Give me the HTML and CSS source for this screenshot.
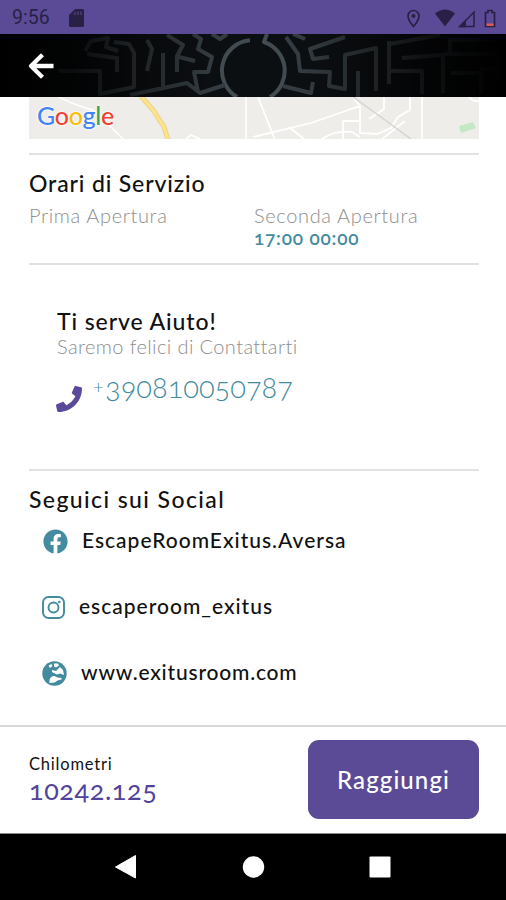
FILE: index.html
```
<!DOCTYPE html>
<html lang="it">
<head>
    <meta charset="UTF-8">
    <meta name="viewport" content="width=device-width, initial-scale=1.0">
    <title>Exitus Room</title>
    <link rel="stylesheet" href="styles.css">
</head>
<body>
    <div class="status-bar">
        <span class="clock">9:56</span>
        <svg class="sd-icon" width="16" height="18" viewBox="0 0 16 18"><path d="M6 0h7.500Q15 0 15 1.500v15Q15 18 13.500 18h-12Q0 18 0 16.500V6z" fill="#292046"/><path d="M6 3v3M9 2.500V6M12 2.500V6" stroke="#5b4b97" stroke-width="1"/></svg>
        <svg class="status-icons" width="92" height="22" viewBox="0 0 92 22" fill="none" stroke="#292046" stroke-width="1.700">
            <path d="M7.500 17.500C4 13.500 2 10.500 2 7a5.500 5.500 0 0 1 11 0c0 3.500-2 6.500-5.500 10.500z"/>
            <circle cx="7.500" cy="7" r="2" fill="#292046" stroke="none"/>
            <path d="M29 4.500q10-8 20 0L39 17.500z" fill="#292046" stroke="none"/>
            <path d="M54 17.500 68 3v14.500z" stroke-width="1.500"/>
            <path d="M52 18.300l8-8v8z" fill="#292046" stroke="none"/>
            <path d="M79.500 3.500H82v-2h4v2h2.500v14h-9z"/>
            <path d="M80.500 14.500h7V17h-7z" fill="#dd5b50" stroke="none"/>
        </svg>
    </div>

    <div class="header">
        <svg class="maze" width="506" height="63" viewBox="0 0 506 63">
            <defs>
                <linearGradient id="fade">
                    <stop offset="0" stop-color="#000"/>
                    <stop offset=".16" stop-color="#000" stop-opacity=".75"/>
                    <stop offset=".42" stop-color="#000" stop-opacity="0"/>
                    <stop offset=".6" stop-color="#000" stop-opacity="0"/>
                    <stop offset=".85" stop-color="#000" stop-opacity=".75"/>
                    <stop offset="1" stop-color="#000"/>
                </linearGradient>
            </defs>
            <rect width="506" height="63" fill="#0c0f12"/>
            <g fill="none" stroke="#343c41" stroke-width="4" stroke-linejoin="round">
                <path d="M250 6.300A30.500 30.500 0 0 0 237 63M267 0l-3 8a30.500 30.500 0 0 1 6 55" stroke="#414b50"/>
                <path d="M58 37h42v23l34-7V19l-5-9-15-2M87 20l30 4v14M85 17l6-10 17-3-2 9 12 4M147 37l5-22-5-9M163 54V19M167 1l16 10-6 11v16M179 23l16 4M193 0l8 5-3 10 14 8-4 15h-14l4 20M130 61l57-12 13 10 25-8M212 0l8 5 7-5"/>
                <path d="M286 3l12 17 2 17 30 1-1 14 16 3V21l31-7v43M345 3l-35 12 3 10 16-2M293 0l12 5M358 37v26M283 52l28 7 2-11M389 7v43M390 10l50-9M402 24l41-3v38M391 37h31v23M444 20h53v28M450 20V6h56M451 39h30v21M480 35h26"/>
            </g>
            <rect width="506" height="63" fill="url(#fade)"/>
        </svg>
        <svg class="back" width="28" height="26" viewBox="0 0 28 26" fill="none" stroke="#fff" stroke-width="4.300" stroke-linejoin="round"><path d="M15.500 1.700 4 13l11.500 11.300M4.500 13H26.500"/></svg>
    </div>

    <main class="content">
        <div class="map">
            <svg width="450" height="42" viewBox="0 0 450 42" fill="none">
                <g stroke="#fff">
                    <path d="M28-1q17 9 36 14l19 18 12 12M217-1v43" stroke-width="1.500"/>
                    <path d="M229 0l17 43M224 40l58-14 49-17v27l17 1 14-6 7-11 12-7V0M324 0l7 9M314 24v18M314 24h17M293 42q13-9 30-7l8 5M353 42l23-18M393 0v42M355 0v12l-15 10M157 42l5-4 9 4M440 0q4 5 10 4M260 30l15 12" stroke-width="1.800"/>
                </g>
                <path d="M324 0l28 20 30 22" stroke="#d6d4d0" stroke-width="1.500"/>
                <path d="M112-1l12 14 11 17 4 13" stroke="#e8cf78" stroke-width="5"/>
                <path d="M112-1l12 14 11 17 4 13" stroke="#fbe38d" stroke-width="3.500"/>
                <path d="M430 29l14-4 3 6-15 5z" fill="#c3e8c6"/>
            </svg>
            <div class="google"><span class="blue">G</span><span class="red">o</span><span class="yellow">o</span><span class="blue">g</span><span class="green">l</span><span class="red">e</span></div>
        </div>

        <section class="hours">
            <h2 class="hours-title">Orari di Servizio</h2>
            <div class="hours-grid">
                <div class="label">Prima Apertura</div>
                <div>
                    <div class="label">Seconda Apertura</div>
                    <div class="time">17:00 00:00</div>
                </div>
            </div>
        </section>

        <section class="help">
            <h2 class="help-title">Ti serve Aiuto!</h2>
            <div class="label">Saremo felici di Contattarti</div>
            <div class="phone">
                <svg width="26" height="26" viewBox="0 0 512 512"><path fill="#5b4a9c" d="M493.400 24.600l-104-24c-11.300-2.600-22.900 3.300-27.500 13.900l-48 112c-4.200 9.800-1.400 21.300 6.900 28l60.600 49.600c-36 76.700-98.900 140.500-177.200 177.200l-49.600-60.600c-6.800-8.300-18.200-11.100-28-6.900l-112 48C3.900 366.500-2 378.100.6 389.400l24 104C27.100 504.200 36.700 512 48 512c256.100 0 464-207.500 464-464 0-11.200-7.700-20.900-18.600-23.400z"/></svg>
                <span class="plus">+</span><span>390810050787</span>
            </div>
        </section>

        <section class="social">
            <h2 class="social-title">Seguici sui Social</h2>
            <div class="social-row">
                <svg width="25" height="25" viewBox="0 0 512 512"><path fill="#438b9e" d="M504 256C504 119 393 8 256 8S8 119 8 256c0 123.800 90.700 226.400 209.300 245V327.700h-63V256h63v-54.600c0-62.200 37-96.500 93.700-96.500 27.100 0 55.500 4.800 55.500 4.800v61h-31.300c-30.800 0-40.400 19.100-40.400 38.700V256h68.800l-11 71.700h-57.800V501C413.300 482.400 504 379.800 504 256z"/></svg>
                <span class="facebook">EscapeRoomExitus.Aversa</span>
            </div>
            <div class="social-row instagram">
                <svg width="25" height="25" viewBox="0 0 25 25" fill="none" stroke="#438b9e" stroke-width="1.900"><rect x="1" y="2" width="21" height="21" rx="5.500"/><circle cx="11.500" cy="12.500" r="5"/><circle cx="17.300" cy="7" r="1.300" fill="#438b9e" stroke="none"/></svg>
                <span>escaperoom_exitus</span>
            </div>
            <div class="social-row website">
                <svg width="25" height="25" viewBox="0 0 25 25"><circle cx="12.500" cy="12.500" r="12.200" fill="#438b9e"/><path d="M6.500 4.500l3-1.500 1 2-2.500 2zM12 2.500l4 0 1 2-3 2-2-1zM10 9l4 1 4-4 3 3 1 5-4-1.500-3 1-5-2.500zM7.500 20c0-3 2-5 5-5l3 1.500 4 .5v1.500l-4 1-3 2-5 .5z" fill="#fff"/></svg>
                <span>www.exitusroom.com</span>
            </div>
        </section>
    </main>

    <footer class="bottom-bar">
        <div>
            <div class="distance-label">Chilometri</div>
            <div class="distance">10242.125</div>
        </div>
        <button class="go-btn">Raggiungi</button>
    </footer>

    <nav class="nav-bar">
        <svg width="506" height="66" viewBox="0 0 506 66" fill="#fff"><path d="M115.500 33 135.500 21.500v22.500z" stroke="#fff" stroke-linejoin="round"/><circle cx="253.500" cy="33" r="10.700"/><rect x="369.500" y="22.500" width="21" height="21" rx="1"/></svg>
    </nav>
</body>
</html>
```
FILE: styles.css
```
* {
    margin: 0;
    padding: 0;
    box-sizing: border-box;
}

body {
    width: 506px;
    height: 900px;
    display: flex;
    flex-direction: column;
    overflow: hidden;
    font-family: Lato, "Open Sans", sans-serif;
    font-variant-numeric: oldstyle-nums;
    font-variant-ligatures: none;
    background: #fff;
    color: #111;
    white-space: nowrap;
}

svg {
    display: block;
    flex-shrink: 0;
}

.status-bar {
    height: 34px;
    background: #5b4b97;
    display: flex;
    align-items: center;
    padding: 1px 8px 0 12px;
}

.clock {
    width: 57px;
    font-family: Roboto, sans-serif;
    font-variant-numeric: normal;
    font-size: 19.5px;
    color: #292046;
}

.status-icons {
    margin-left: auto;
    margin-top: 4px;
}

.header {
    height: 63px;
    position: relative;
    background: #000;
}

.back {
    position: absolute;
    left: 27px;
    top: 19px;
}

.content {
    height: 628px;
    padding: 0 27px 0 29px;
}

.map {
    position: relative;
    width: 450px;
    height: 42px;
    overflow: hidden;
    background: #efedea;
}

.google {
    position: absolute;
    left: 8px;
    top: 3px;
    font-size: 25px;
    line-height: 30px;
    font-weight: 500;
    letter-spacing: -0.3px;
    text-shadow: 0 0 3px #fff, 0 0 2px #fff;
}

.blue {
    color: #4285f4;
}

.red {
    color: #ea4335;
}

.yellow {
    color: #fbbc05;
}

.green {
    color: #34a853;
}

h2 {
    font-size: 23px;
    line-height: 28px;
    font-weight: 500;
}

.label {
    font-size: 20px;
    line-height: 24px;
    font-weight: 300;
    color: #8e8e8e;
    letter-spacing: 0.65px;
}

.hours {
    height: 112px;
    margin-top: 14px;
    padding-top: 14px;
    border-top: 2px solid #e2e2e2;
    border-bottom: 2px solid #e2e2e2;
}

.hours-title {
    letter-spacing: 0.85px;
}

.hours-grid {
    display: grid;
    grid-template-columns: 225px 225px;
    padding-top: 6px;
}

.time {
    font-size: 19px;
    line-height: 22px;
    font-weight: 600;
    color: #438b9e;
    letter-spacing: 0.8px;
}

.help {
    height: 206px;
    padding: 42px 0 0 28px;
    border-bottom: 2px solid #e2e2e2;
}

.help-title {
    letter-spacing: 0.9px;
}

.help .label {
    margin-top: -1px;
    letter-spacing: 0.4px;
}

.phone {
    display: flex;
    margin-top: 13px;
    color: #438b9e;
    font-size: 29px;
    line-height: 32px;
    font-weight: 300;
}

.phone svg {
    margin: 15px 11px 0 -1px;
}

.phone .plus {
    width: 12px;
    font-size: 20px;
    line-height: 28px;
}

.social {
    padding-top: 14px;
}

.social-row {
    display: flex;
    align-items: center;
    height: 66px;
    padding-left: 14px;
    gap: 14px;
    font-size: 21px;
    font-weight: 500;
    letter-spacing: 1px;
}

.social-title {
    margin-bottom: -5px;
    letter-spacing: 1.4px;
}

.social-row span {
    margin-top: -4px;
}

.social-row.instagram {
    padding-left: 13px;
    gap: 12px;
}

.social-row.website {
    padding-left: 13px;
    letter-spacing: 0.8px;
}

.bottom-bar {
    height: 109px;
    border-top: 2px solid #d9d9d9;
    border-bottom: 1px solid #888;
    display: flex;
    justify-content: space-between;
    align-items: flex-start;
    padding: 13px 27px 0 29px;
}

.distance-label {
    margin-top: 14px;
    font-size: 16.5px;
    line-height: 20px;
    letter-spacing: 0.8px;
}

.distance {
    margin-top: 2px;
    font-size: 27px;
    line-height: 28px;
    color: #51439a;
    letter-spacing: 0.6px;
}

.go-btn {
    width: 171px;
    height: 79px;
    border: none;
    border-radius: 11px;
    background: #5b4b97;
    color: #fff;
    font-family: inherit;
    font-size: 24px;
    font-weight: 500;
    letter-spacing: 1.1px;
}

.nav-bar {
    height: 66px;
    background: #000;
}
```
